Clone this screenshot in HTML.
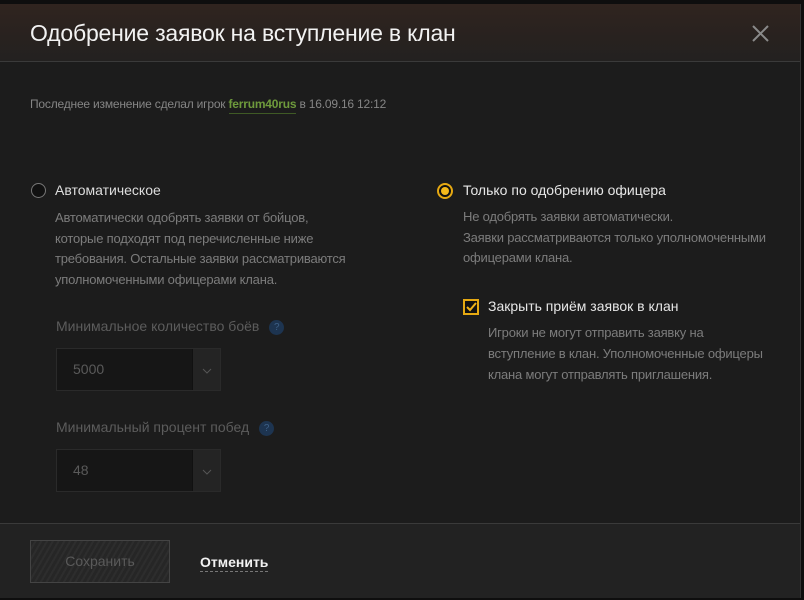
<!DOCTYPE html>
<html><head><meta charset="utf-8"><style>
*{margin:0;padding:0;box-sizing:border-box}
body{width:804px;height:600px;background:#0e0e0e;font-family:"Liberation Sans Narrow","Liberation Sans",sans-serif;position:relative;overflow:hidden;color:#ddd}
.dlg{position:absolute;left:0;top:4px;width:801px;height:594px;background:#1c1c1c;border-right:1px solid #333}
.hdr{position:absolute;left:0;top:0;width:100%;height:58px;background:linear-gradient(180deg,#30241f 0%,#28221f 60%,#232120 100%);border-bottom:1px solid #3a3a3a}
.t{position:absolute;font-size:14px;white-space:nowrap}
.desc{position:absolute;font-size:13px;line-height:20.5px;color:#7c7c7c;letter-spacing:-0.2px}
.sel{position:absolute;left:56px;width:165px;height:43px;background:#161616;border:1px solid #2a2a2a}
.sel .ar{position:absolute;right:0;top:0;width:28px;height:41px;background:#242424;border-left:1px solid #111}
.sel span{position:absolute;left:16px;top:12px;font-size:14px;color:#5a5a5a}
.q{display:inline-block;width:15px;height:15px;border-radius:50%;background:#1d3450;color:#3d5f85;font-size:10px;text-align:center;line-height:15px;margin-left:10px;vertical-align:1px}
.ftr{position:absolute;left:0;top:519px;width:100%;height:75px;background:#222;border-top:1px solid #3a3a3a}
</style></head><body>
<div class="dlg">
<div class="hdr">
<div class="t" style="left:30px;top:16px;font-size:23px;color:#f2f2f2;letter-spacing:-0.2px">Одобрение заявок на вступление в клан</div>
<svg style="position:absolute;left:752px;top:21px" width="17" height="17"><path d="M1 1L16 16M16 1L1 16" stroke="#8a8a8a" stroke-width="2"/></svg>
</div>
<div class="t" style="left:30px;top:93px;font-size:12px;color:#858585;letter-spacing:-0.2px">Последнее изменение сделал игрок <span style="color:#6e9a3c;font-weight:bold;border-bottom:1px solid #3f5a25;padding-bottom:2px">ferrum40rus</span> в 16.09.16 12:12</div>

<div style="position:absolute;left:31px;top:179px;width:15px;height:15px;border-radius:50%;border:1px solid #777;background:#111"></div>
<div class="t" style="left:55px;top:178px;color:#ddd">Автоматическое</div>
<div class="desc" style="left:55px;top:204px;width:320px">Автоматически одобрять заявки от бойцов,<br>которые подходят под перечисленные ниже<br>требования. Остальные заявки рассматриваются<br>уполномоченными офицерами клана.</div>

<div class="t" style="left:56px;top:314px;color:#5c5c5c">Минимальное количество боёв<span class="q">?</span></div>
<div class="sel" style="top:344px"><span>5000</span><div class="ar"><svg style="position:absolute;left:9px;top:19px" width="10" height="6"><path d="M1 1L5 5L9 1" stroke="#555" fill="none"/></svg></div></div>
<div class="t" style="left:56px;top:415px;color:#5c5c5c">Минимальный процент побед<span class="q">?</span></div>
<div class="sel" style="top:445px"><span>48</span><div class="ar"><svg style="position:absolute;left:9px;top:19px" width="10" height="6"><path d="M1 1L5 5L9 1" stroke="#555" fill="none"/></svg></div></div>

<div style="position:absolute;left:437px;top:179px;width:16px;height:16px;border-radius:50%;border:2px solid #e6a912;background:#111"><div style="position:absolute;left:2px;top:2px;width:8px;height:8px;border-radius:50%;background:#f5b91a"></div></div>
<div class="t" style="left:463px;top:178px;color:#e6e6e6">Только по одобрению офицера</div>
<div class="desc" style="left:463px;top:203px;width:330px">Не одобрять заявки автоматически.<br>Заявки рассматриваются только уполномоченными<br>офицерами клана.</div>

<div style="position:absolute;left:463px;top:295px;width:16px;height:16px;border:2px solid #e6a912;background:#111"><svg style="position:absolute;left:1px;top:1px" width="11" height="10"><path d="M1 5L4 8L10 1" stroke="#f0b21a" stroke-width="2" fill="none"/></svg></div>
<div class="t" style="left:488px;top:294px;color:#e6e6e6">Закрыть приём заявок в клан</div>
<div class="desc" style="left:488px;top:318px;width:300px;line-height:21px">Игроки не могут отправить заявку на<br>вступление в клан. Уполномоченные офицеры<br>клана могут отправлять приглашения.</div>

<div class="ftr">
<div style="position:absolute;left:30px;top:16px;width:140px;height:43px;border:1px solid #444;background:repeating-linear-gradient(-60deg,#2d2d2d 0 2px,#262626 2px 5px)"><div class="t" style="left:0;width:138px;text-align:center;top:12px;color:#5a5a5a">Сохранить</div></div>
<div class="t" style="left:200px;top:30px;color:#f2f2f2;font-weight:bold;border-bottom:1px dashed #777;padding-bottom:1px">Отменить</div>
</div>
</div>
</body></html>
